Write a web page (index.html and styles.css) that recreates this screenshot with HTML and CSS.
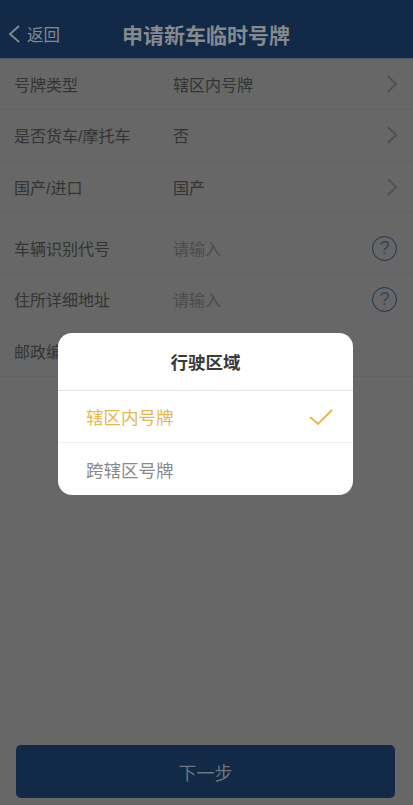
FILE: index.html
```html
<!DOCTYPE html>
<html lang="zh-CN">
<head>
    <meta charset="UTF-8">
    <meta name="viewport" content="width=device-width, initial-scale=1.0">
    <title>申请新车临时号牌</title>
    <link rel="stylesheet" href="styles.css">
</head>
<body>
    <div class="page">
        <header class="topbar">
            <div class="back">
                <svg class="back-icon" width="12" height="20" viewBox="0 0 12 20"><path d="M11 2 L2 10 L11 18" /></svg>
                <span>返回</span>
            </div>
            <h1>申请新车临时号牌</h1>
        </header>

        <div class="group">
            <div class="row">
                <span class="label">号牌类型</span>
                <span class="value">辖区内号牌</span>
                <svg class="arrow" width="12" height="20" viewBox="0 0 12 20"><path d="M2 2 L10 10 L2 18" /></svg>
            </div>
            <div class="row">
                <span class="label">是否货车/摩托车</span>
                <span class="value">否</span>
                <svg class="arrow" width="12" height="20" viewBox="0 0 12 20"><path d="M2 2 L10 10 L2 18" /></svg>
            </div>
            <div class="row">
                <span class="label">国产/进口</span>
                <span class="value">国产</span>
                <svg class="arrow" width="12" height="20" viewBox="0 0 12 20"><path d="M2 2 L10 10 L2 18" /></svg>
            </div>
        </div>

        <div class="group">
            <div class="row">
                <span class="label">车辆识别代号</span>
                <span class="value hint">请输入</span>
                <span class="help">?</span>
            </div>
            <div class="row">
                <span class="label">住所详细地址</span>
                <span class="value hint">请输入</span>
                <span class="help">?</span>
            </div>
            <div class="row">
                <span class="label">邮政编码</span>
            </div>
        </div>

        <div class="spacer"></div>
        <button class="next" type="button">下一步</button>
    </div>

    <div class="dialog">
        <div class="dialog-title">行驶区域</div>
        <div class="option selected">
            <span>辖区内号牌</span>
            <svg class="check" width="26" height="20" viewBox="0 0 26 20"><path d="M2 10 L10 17 L24 3" /></svg>
        </div>
        <div class="option">
            <span>跨辖区号牌</span>
        </div>
    </div>
</body>
</html>
```

FILE: styles.css
```css
* {
    margin: 0;
    padding: 0;
    box-sizing: border-box;
}
html, body {
    height: 100%;
}
body {
    font-family: "Liberation Sans", "Noto Sans CJK SC", sans-serif;
    background-color: #666766;
    overflow: hidden;
}
.page {
    height: 805px;
    display: flex;
    flex-direction: column;
}
.topbar {
    height: 59px;
    flex-shrink: 0;
    padding-top: 9px;
    background-color: #122947;
    display: flex;
    align-items: center;
    border-bottom: 1px solid #4a5a6a;
    color: #858a8f;
}
.back {
    width: 122px;
    display: flex;
    align-items: center;
    gap: 7px;
    padding-left: 8px;
    font-size: 16.5px;
}
.back-icon path {
    fill: none;
    stroke: #858a8f;
    stroke-width: 1.8;
}
.topbar h1 {
    font-size: 21px;
    font-weight: bold;
    white-space: nowrap;
}
.group {
    border-bottom: 1px solid #606160;
    margin-bottom: 10px;
}
.row {
    height: 51px;
    display: flex;
    align-items: center;
    padding: 0 15px 0 14px;
    font-size: 16px;
    color: #333434;
    border-bottom: 1px solid #626362;
}
.row:last-child {
    border-bottom: none;
}
.label {
    width: 159px;
    flex-shrink: 0;
    white-space: nowrap;
}
.value {
    flex: 1;
}
.hint {
    color: #4b4c4c;
}
.arrow path {
    fill: none;
    stroke: #505151;
    stroke-width: 1.8;
}
.help {
    width: 25px;
    height: 25px;
    border: 1.5px solid #1c3453;
    border-radius: 50%;
    color: #34465c;
    font-size: 18px;
    line-height: 22px;
    text-align: center;
    margin-right: 1px;
}
.spacer {
    flex: 1;
}
.next {
    display: block;
    flex-shrink: 0;
    margin: 0 18px 7px 16px;
    height: 53px;
    border: none;
    border-radius: 5px;
    background-color: #122947;
    color: #6f757c;
    font-family: inherit;
    font-size: 18px;
}
.dialog {
    position: absolute;
    left: 58px;
    top: 333px;
    width: 295px;
    height: 162px;
    background-color: #fff;
    border-radius: 14px;
    overflow: hidden;
}
.dialog-title {
    height: 58px;
    display: flex;
    align-items: center;
    justify-content: center;
    font-size: 17.5px;
    font-weight: bold;
    color: #3a3a3a;
    border-bottom: 1px solid #e2e2e2;
}
.option {
    height: 52px;
    display: flex;
    align-items: center;
    justify-content: space-between;
    padding: 0 19px 0 28px;
    font-size: 17.5px;
    color: #8a8a8a;
}
.selected {
    color: #e6b655;
    border-bottom: 1px solid #f0f0f0;
}
.check path {
    fill: none;
    stroke: #e6b655;
    stroke-width: 2;
}
```
